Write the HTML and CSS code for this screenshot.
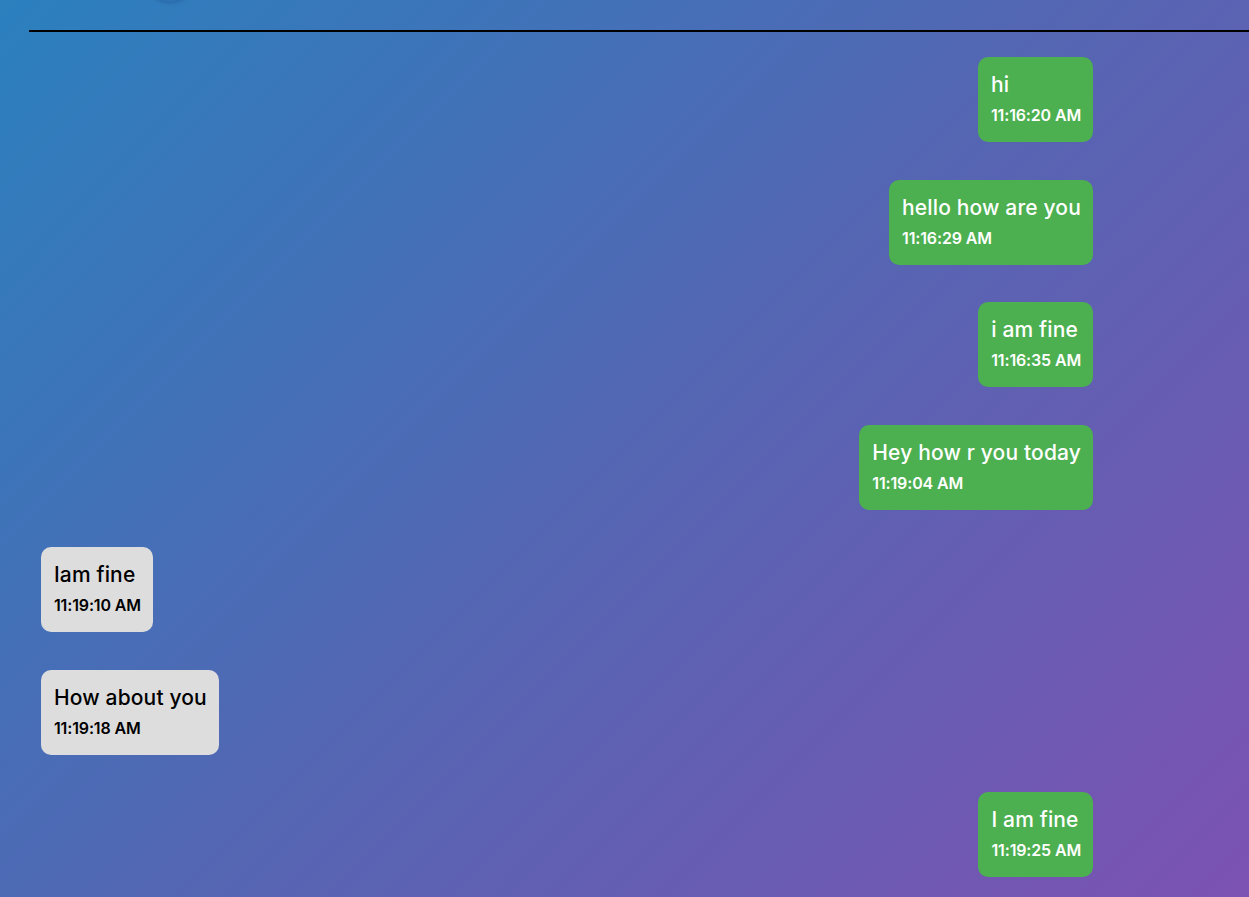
FILE: index.html
```html
<!DOCTYPE html>
<html lang="en">
<head>
<meta charset="utf-8">
<title>Chat</title>
<link rel="stylesheet" href="styles.css">
</head>
<body>
<div class="page">
  <header class="chat-header">
    <div class="avatar"></div>
  </header>
  <div class="messages">
    <div class="row sent"><div class="bubble"><div class="text">hi</div><div class="time">11:16:20 AM</div></div></div>
    <div class="row sent"><div class="bubble"><div class="text">hello how are you</div><div class="time">11:16:29 AM</div></div></div>
    <div class="row sent"><div class="bubble"><div class="text">i am fine</div><div class="time">11:16:35 AM</div></div></div>
    <div class="row sent"><div class="bubble"><div class="text">Hey how r you today</div><div class="time">11:19:04 AM</div></div></div>
    <div class="row received"><div class="bubble"><div class="text">Iam fine</div><div class="time">11:19:10 AM</div></div></div>
    <div class="row received"><div class="bubble"><div class="text">How about you</div><div class="time">11:19:18 AM</div></div></div>
    <div class="row sent"><div class="bubble"><div class="text">I am fine</div><div class="time">11:19:25 AM</div></div></div>
  </div>
</div>
</body>
</html>
```
FILE: styles.css
```css
html, body {
  margin: 0;
  padding: 0;
}
body {
  font-family: "Inter", "Liberation Sans", sans-serif;
}
.page {
  height: 897px;
  overflow: hidden;
  background: linear-gradient(135deg, #2b80be 0%, #5466b3 50%, #7c52b2 100%);
}
.chat-header {
  margin-left: 29px;
  height: 30px;
  border-bottom: 2px solid #000;
  position: relative;
}
.avatar {
  position: absolute;
  left: 117px;
  top: -44px;
  width: 48px;
  height: 46px;
  border-radius: 50%;
  background: #2c72b4;
  box-shadow: 0 0 4px rgba(20, 60, 120, 0.5);
}
.messages {
  display: flex;
  flex-direction: column;
  gap: 37.5px;
  padding: 25px 156px 0 41px;
}
.row {
  display: flex;
}
.row.sent {
  justify-content: flex-end;
}
.row.received {
  justify-content: flex-start;
}
.bubble {
  padding: 12px 12px 13px 13px;
  border-radius: 10px;
  height: 60px;
}
.sent .bubble {
  background: #4caf50;
  color: #fff;
}
.received .bubble {
  background: #dddddd;
  color: #000;
}
.text {
  font-size: 21px;
  font-weight: 500;
  letter-spacing: 0.15px;
  line-height: 31px;
  white-space: nowrap;
}
.time {
  font-size: 16px;
  font-weight: 600;
  letter-spacing: -0.15px;
  line-height: 27px;
  padding-top: 2px;
  white-space: nowrap;
}
```
